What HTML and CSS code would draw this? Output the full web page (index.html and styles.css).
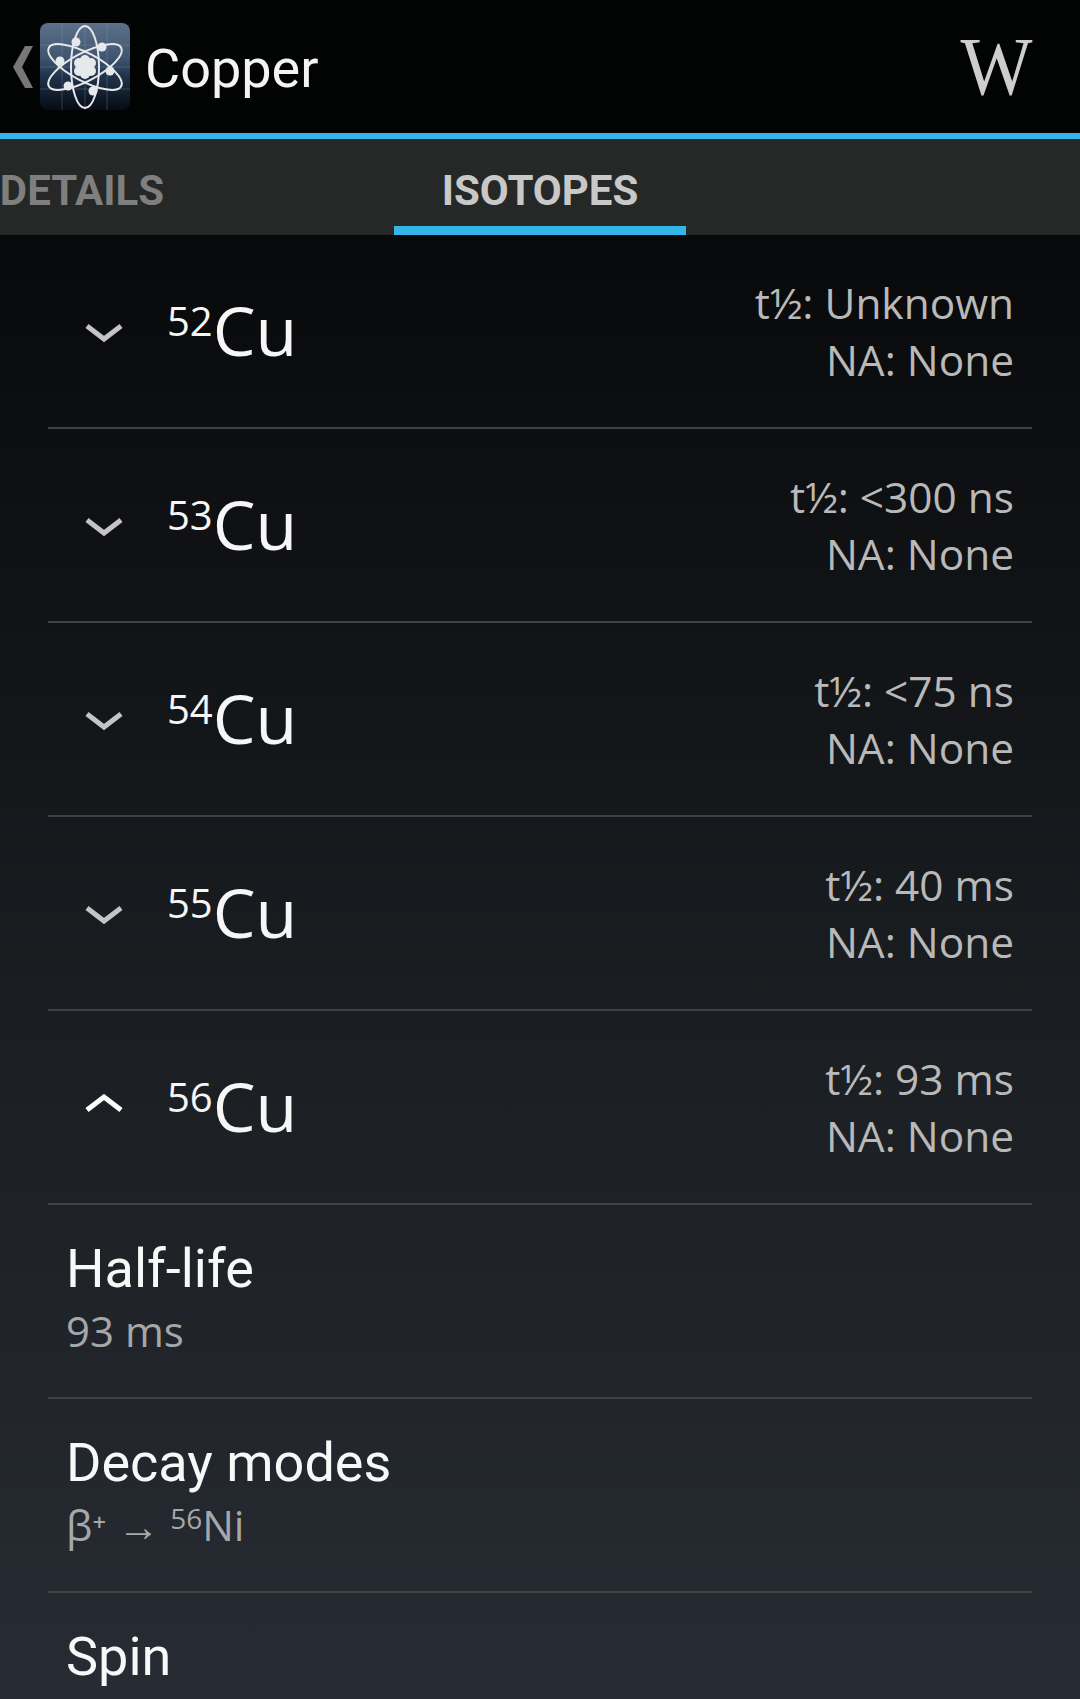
FILE: index.html
```html
<!DOCTYPE html>
<html>
<head>
  <meta charset="utf-8">
  <title>Copper</title>
  <link rel="stylesheet" href="styles.css">
</head>
<body>

  <div class="action-bar">
    <svg class="back" width="20" height="42" viewBox="0 0 20 42"><polygon points="12,0 20,0 9,21 20,42 12,42 0,21" fill="#777"/></svg>
    <svg class="app-icon" width="90" height="87" viewBox="0 0 90 87">
      <defs>
        <linearGradient id="icon-bg" x1="0" y1="0" x2="0" y2="1">
          <stop offset="0" stop-color="#5d7189"/>
          <stop offset="0.4" stop-color="#3f5570"/>
          <stop offset="0.6" stop-color="#22344c"/>
          <stop offset="1" stop-color="#060b14"/>
        </linearGradient>
      </defs>
      <rect width="90" height="87" rx="8" fill="url(#icon-bg)"/>
      <g stroke="#8fa0b3" stroke-opacity="0.3" stroke-width="1">
        <path d="M22 0V87M45 0V87M67 0V87M0 22H90M0 44H90M0 66H90"/>
      </g>
      <g fill="none" stroke="#e6e9ec" stroke-width="2">
        <ellipse cx="45" cy="44" rx="14" ry="41"/>
        <ellipse cx="45" cy="44" rx="14" ry="41" transform="rotate(62 45 44)"/>
        <ellipse cx="45" cy="44" rx="14" ry="41" transform="rotate(-62 45 44)"/>
      </g>
      <g fill="#e6e9ec">
        <circle cx="45" cy="44" r="8"/>
        <circle cx="45" cy="37" r="5"/><circle cx="45" cy="51" r="5"/>
        <circle cx="39" cy="40" r="5"/><circle cx="51" cy="40" r="5"/>
        <circle cx="39" cy="48" r="5"/><circle cx="51" cy="48" r="5"/>
        <circle cx="36" cy="19" r="4.5"/><circle cx="62" cy="24" r="4.5"/>
        <circle cx="20" cy="38" r="4.5"/><circle cx="70" cy="48" r="4.5"/>
        <circle cx="28" cy="63" r="4.5"/><circle cx="53" cy="68" r="4.5"/>
      </g>
    </svg>
    <div class="title">Copper</div>
    <div class="wiki">W</div>
  </div>

  <div class="tabs">
    <div class="tab tab-first">DETAILS</div>
    <div class="tab tab-active">ISOTOPES</div>
  </div>

  <div class="list">
    <div class="row">
      <svg class="chevron" width="38" height="26" viewBox="0 0 38 26"><path d="M2 8L19 21L36 8"/></svg>
      <div class="isotope"><sup>52</sup>Cu</div>
      <div class="stats">t½: Unknown<br>NA: None</div>
    </div>
    <div class="row">
      <svg class="chevron" width="38" height="26" viewBox="0 0 38 26"><path d="M2 8L19 21L36 8"/></svg>
      <div class="isotope"><sup>53</sup>Cu</div>
      <div class="stats">t½: &lt;300 ns<br>NA: None</div>
    </div>
    <div class="row">
      <svg class="chevron" width="38" height="26" viewBox="0 0 38 26"><path d="M2 8L19 21L36 8"/></svg>
      <div class="isotope"><sup>54</sup>Cu</div>
      <div class="stats">t½: &lt;75 ns<br>NA: None</div>
    </div>
    <div class="row">
      <svg class="chevron" width="38" height="26" viewBox="0 0 38 26"><path d="M2 8L19 21L36 8"/></svg>
      <div class="isotope"><sup>55</sup>Cu</div>
      <div class="stats">t½: 40 ms<br>NA: None</div>
    </div>
    <div class="row">
      <svg class="chevron chevron-open" width="38" height="26" viewBox="0 0 38 26"><path d="M2 16L19 3L36 16"/></svg>
      <div class="isotope"><sup>56</sup>Cu</div>
      <div class="stats">t½: 93 ms<br>NA: None</div>
    </div>
    <div class="row prop">
      <div class="prop-name">Half-life</div>
      <div class="prop-value">93 ms</div>
    </div>
    <div class="row prop">
      <div class="prop-name">Decay modes</div>
      <div class="prop-value">β⁺ → <sup>56</sup>Ni</div>
    </div>
    <div class="row prop prop-last">
      <div class="prop-name">Spin</div>
    </div>
  </div>

</body>
</html>
```

FILE: styles.css
```css
html, body {
  margin: 0;
  height: 1699px;
  overflow: hidden;
}
body {
  background: #000;
  color: #fff;
  font-family: "Open Sans", sans-serif;
}

/* action bar */
.action-bar {
  display: flex;
  align-items: center;
  height: 133px;
  padding: 0 48px 0 13px;
  background: #020303;
  border-bottom: 6px solid #33b5e5;
}
.back {
  margin-right: 7px;
}
.app-icon {
  margin-right: 15px;
}
.title {
  flex: 1;
  padding-top: 4px;
  font-family: Roboto, sans-serif;
  font-size: 54px;
  color: #f4f4f4;
}
.wiki {
  font-family: "Liberation Serif", serif;
  font-size: 82px;
  line-height: 82px;
  color: #cdcdcd;
  transform: scaleX(0.93);
  transform-origin: right;
}

/* tabs */
.tabs {
  display: flex;
  height: 96px;
  background: #262727;
  font-family: Roboto, sans-serif;
  font-size: 42px;
  font-weight: 700;
  color: #7f7f7f;
  overflow: hidden;
}
.tab {
  display: flex;
  align-items: center;
  justify-content: center;
  flex: none;
  width: 292px;
  box-sizing: border-box;
  padding-top: 6px;
}
.tab-first {
  margin-left: -64px;
}
.tab-active {
  margin-left: 166px;
  padding-top: 16px;
  color: #c8c8c8;
  border-bottom: 9px solid #33b5e5;
}

/* list */
.list {
  height: 1464px;
  padding: 0 48px;
  background: linear-gradient(#08090b, #1c2024 59%, #272b33);
  overflow: hidden;
}
.row {
  display: flex;
  align-items: center;
  height: 192px;
  border-bottom: 2px solid #3f4144;
}
.chevron {
  margin: 0 44px 0 37px;
  fill: none;
  stroke: #c4c4c4;
  stroke-width: 5px;
}
.chevron-open {
  stroke: #fff;
}
.isotope {
  flex: 1;
  padding-bottom: 4px;
  font-size: 68px;
  color: #f6f6f6;
}
.isotope sup {
  font-size: 40px;
  font-weight: 500;
  line-height: 0;
  vertical-align: 20px;
}
.stats {
  padding-right: 18px;
  font-size: 42.4px;
  line-height: 57px;
  text-align: right;
  color: #b9b9b9;
}

/* property rows */
.prop {
  flex-direction: column;
  align-items: flex-start;
  padding: 32px 0 0 18px;
  box-sizing: content-box;
  height: 160px;
}
.prop-last {
  border-bottom: 0;
}
.prop-name {
  font-family: Roboto, sans-serif;
  font-size: 54px;
  line-height: 64px;
  color: #f8f8f8;
}
.prop-value {
  font-size: 42px;
  line-height: 60px;
  color: #a5a7a9;
}
.prop-value sup {
  font-size: 28px;
  font-weight: 500;
  line-height: 0;
  vertical-align: 12px;
}
```
